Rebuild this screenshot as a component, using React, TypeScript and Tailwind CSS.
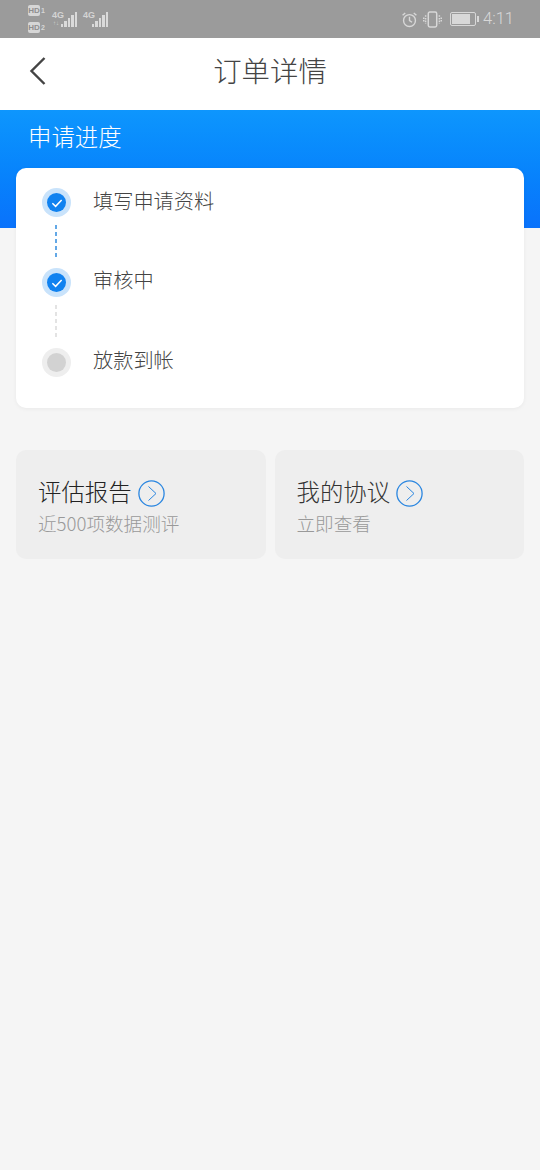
import React from 'react';

const font = "font-['Noto_Sans_CJK_SC','Noto_Sans',sans-serif]";

function Signal({ label, mark }: { label: string; mark?: boolean }) {
  const bars = [3, 6, 9, 12, 15];
  return (
    <div className="relative w-[26px] h-[16px]">
      <span className="absolute left-0 top-0 text-[9px] leading-[9px] font-bold text-[#d4d4d4] font-['Liberation_Sans',sans-serif]">{label}</span>
      {mark && <span className="absolute left-[1px] bottom-[1px] text-[6px] leading-[6px] text-[#d4d4d4] font-['Liberation_Sans',sans-serif]">↑↓</span>}
      <div className="absolute left-[9px] bottom-0 flex items-end gap-[1px]">
        {bars.map((h, i) => (
          <div key={i} className="w-[2.4px] bg-[#dadada]" style={{ height: h }} />
        ))}
      </div>
    </div>
  );
}

function HdBadge({ n }: { n: string }) {
  return (
    <div className="flex items-center gap-[1px] h-[12px]">
      <span className="bg-[#d6d6d6] text-[#8f8f8f] text-[8px] font-bold leading-[11px] w-[12px] h-[11px] rounded-[2px] text-center font-['Liberation_Sans',sans-serif]">HD</span>
      <span className="text-[#d6d6d6] text-[7px] leading-[8px] font-bold font-['Liberation_Sans',sans-serif]">{n}</span>
    </div>
  );
}

function StatusBar() {
  return (
    <div className="h-[38px] bg-[#9b9b9b] flex items-center justify-between pl-[28px] pr-[26px] shrink-0">
      <div className="flex items-center">
        <div className="flex flex-col gap-[5px] w-[24px]">
          <HdBadge n="1" />
          <HdBadge n="2" />
        </div>
        <Signal label="4G" mark />
        <div className="w-[5px]" />
        <Signal label="4G" />
      </div>
      <div className="flex items-center text-[#d8d8d8]">
        <svg width="17" height="17" viewBox="0 0 16 16" fill="none" stroke="#d8d8d8" strokeWidth="1.3" className="mr-[5px]">
          <circle cx="8" cy="9" r="5.6" />
          <path d="M8 5.5V9l2.4 1.6M1.5 4 4 1.8M14.5 4 12 1.8" />
        </svg>
        <svg width="19" height="17" viewBox="0 0 18 16" fill="none" stroke="#d8d8d8" strokeWidth="1.4" className="mr-[8px]">
          <rect x="5" y="1" width="8" height="14" rx="1.5" />
          <path d="M2.5 4v8M15.5 4v8M0.7 6v4M17.3 6v4" strokeDasharray="1.5 1" />
        </svg>
        <div className="flex items-center mr-[4px]">
          <div className="w-[26px] h-[14px] border border-[#d8d8d8] rounded-[2px] p-[1px]">
            <div className="h-full w-[18px] bg-[#d8d8d8]" />
          </div>
          <div className="w-[2px] h-[6px] bg-[#d8d8d8] ml-[1px]" />
        </div>
        <span className="text-[16.5px] leading-none font-['Roboto',sans-serif] font-light">4:11</span>
      </div>
    </div>
  );
}

function Check() {
  return (
    <div className="w-[29px] h-[29px] rounded-full bg-[#c9e3fb] flex items-center justify-center shrink-0">
      <div className="w-[19px] h-[19px] rounded-full bg-[#1082f0] flex items-center justify-center">
        <svg width="14" height="14" viewBox="0 0 13 13" fill="none" stroke="#ffffff" strokeWidth="1.4">
          <path d="M2.2 6.8 5.2 9.6 10.8 3.8" />
        </svg>
      </div>
    </div>
  );
}

function Pending() {
  return (
    <div className="w-[29px] h-[29px] rounded-full bg-[#eeeeee] flex items-center justify-center shrink-0">
      <div className="w-[19px] h-[19px] rounded-full bg-[#d2d2d2]" />
    </div>
  );
}

function Step({ icon, text, line, lift }: { icon: React.ReactNode; text: string; line?: 'blue' | 'gray'; lift: string }) {
  return (
    <div className="flex flex-col">
      <div className="flex items-center h-[29px]">
        {icon}
        <span className={`ml-[22px] text-[20.2px] leading-[29px] font-light text-[#444444] relative ${lift}`}>{text}</span>
      </div>
      {line && (
        <div className="h-[51px] pl-[13px] pt-[8px]">
          <svg width="2" height="33" viewBox="0 0 2 33" className="block">
            <path
              d="M1 0V33"
              stroke={line === 'blue' ? '#3d93e0' : '#dcdcdc'}
              strokeWidth="1.6"
              strokeDasharray="4 3"
            />
          </svg>
        </div>
      )}
    </div>
  );
}

function Arrow() {
  return (
    <svg width="27" height="27" viewBox="0 0 27 27" fill="none" className="shrink-0">
      <circle cx="13.5" cy="13.5" r="12.6" stroke="#2a86e0" strokeWidth="1.3" />
      <path d="M10.5 6.5 18 13.5 10.5 20.5" stroke="#2a86e0" strokeWidth="1" />
    </svg>
  );
}

function Card({ title, sub, dark }: { title: string; sub: string; dark?: boolean }) {
  return (
    <div className="flex-1 h-[109px] bg-[#eeeeee] rounded-[10px] pl-[22px] pt-[28px]">
      <div className="flex items-center h-[30px]">
        <span className={dark ? 'text-[23.4px] leading-[30px] font-light text-[#222222] relative top-[-2px]' : 'text-[23.4px] leading-[30px] font-light text-[#333333] relative top-[-2px]'}>{title}</span>
        <span className="ml-[6px]"><Arrow /></span>
      </div>
      <div className="text-[18.6px] leading-[26px] font-light text-[#999999] mt-[2px]">{sub}</div>
    </div>
  );
}

export default function App() {
  return (
    <div className={`${font} w-[540px] h-[1170px] bg-[#f5f5f5] flex flex-col overflow-hidden`}>
      <StatusBar />

      {/* Nav */}
      <div className="h-[72px] bg-white flex items-center justify-center relative shrink-0">
        <svg width="18" height="30" viewBox="0 0 18 30" fill="none" stroke="#444444" strokeWidth="2.4" className="absolute left-[29px] top-[18px]">
          <path d="M15.5 2 2.5 15 15.5 28" />
        </svg>
        <span className="text-[28.4px] leading-none font-light text-[#444444] relative top-[-4px]">订单详情</span>
      </div>

      {/* Blue header + progress card */}
      <div className="h-[118px] bg-gradient-to-b from-[#0e96fd] to-[#0a72fb] shrink-0 px-[16px]">
        <div className="pl-[13px] h-[58px] flex items-center text-white text-[23.4px] leading-none font-light relative top-[-2px] left-[-1px]">申请进度</div>
        <div className="h-[240px] bg-white rounded-[10px] pl-[26px] pt-[20px] relative shadow-[0_1px_4px_rgba(0,0,0,0.05)]">
          <Step icon={<Check />} text="填写申请资料" line="blue" lift="top-[-2px]" />
          <Step icon={<Check />} text="审核中" line="gray" lift="top-[-3px]" />
          <Step icon={<Pending />} text="放款到帐" lift="top-[-3px]" />
        </div>
      </div>

      {/* Cards */}
      <div className="mt-[222px] px-[16px] flex gap-[9px]">
        <Card title="评估报告" sub="近500项数据测评" dark />
        <Card title="我的协议" sub="立即查看" />
      </div>
    </div>
  );
}
